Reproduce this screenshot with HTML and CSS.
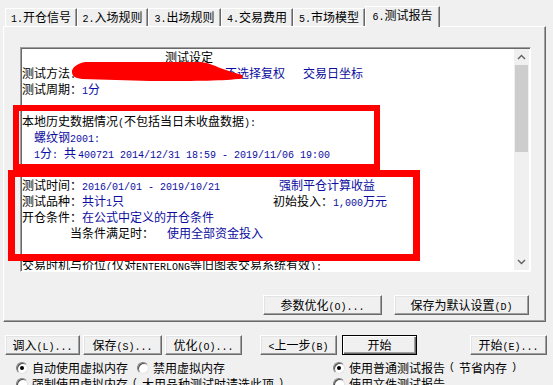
FILE: index.html
```html
<!DOCTYPE html>
<html>
<head>
<meta charset="utf-8">
<link rel="stylesheet" href="styles.css">
</head>
<body>
<div class="window">
  <div class="tabs">
    <div class="tab t1"><span class="m">1.</span>开仓信号</div>
    <div class="tab t2"><span class="m">2.</span>入场规则</div>
    <div class="tab t3"><span class="m">3.</span>出场规则</div>
    <div class="tab t4"><span class="m">4.</span>交易费用</div>
    <div class="tab t5"><span class="m">5.</span>市场模型</div>
    <div class="tab t6 active"><span class="m">6.</span>测试报告</div>
  </div>
  <div class="panel">
    <div class="memo">
      <div class="memo-text">
        <div class="line title">测试设定</div>
        <div class="line">测试方法：<span class="v gap-a">不选择复权</span><span class="v gap-b">交易日坐标</span></div>
        <div class="line">测试周期：<span class="v"><span class="m">1</span>分</span></div>
        <div class="line"></div>
        <div class="line">本地历史数据情况<span class="m">(</span>不包括当日未收盘数据<span class="m">):</span></div>
        <div class="line ind v">螺纹钢<span class="m">2001:</span></div>
        <div class="line ind v"><span class="m">1</span>分<span class="m">: </span>共<span class="m gap-d">400721 2014/12/31 18:59 - 2019/11/06 19:00</span></div>
        <div class="line"></div>
        <div class="line"><span class="c1">测试时间：<span class="v m">2016/01/01 - 2019/10/21</span></span><span class="v c2a">强制平仓计算收益</span></div>
        <div class="line"><span class="c1">测试品种：<span class="v">共计<span class="m">1</span>只</span></span>初始投入：<span class="v"><span class="m">1,000</span>万元</span></div>
        <div class="line">开仓条件：<span class="v">在公式中定义的开仓条件</span></div>
        <div class="line ind2">当条件满足时：<span class="v gap-c">使用全部资金投入</span></div>
        <div class="line"></div>
        <div class="line">交易时机与价位<span class="m">(</span>仅对<span class="m">ENTERLONG</span>等旧图表交易系统有效<span class="m">):</span></div>
      </div>
      <div class="vscroll">
        <div class="sbtn"><svg width="15" height="16" viewBox="0 0 15 16"><polyline points="4,10 7.5,6.5 11,10" fill="none" stroke="#606060" stroke-width="1.4"/></svg></div>
        <div class="track"><div class="thumb"></div></div>
        <div class="sbtn"><svg width="15" height="16" viewBox="0 0 15 16"><polyline points="4,6 7.5,9.5 11,6" fill="none" stroke="#606060" stroke-width="1.4"/></svg></div>
      </div>
    </div>
    <div class="panel-buttons">
      <button class="btn b-opt">参数优化<span class="m">(O)...</span></button>
      <button class="btn b-def">保存为默认设置<span class="m">(D)</span></button>
    </div>
  </div>
  <div class="actions">
    <button class="btn a1">调入<span class="m">(L)...</span></button>
    <button class="btn a2">保存<span class="m">(S)...</span></button>
    <button class="btn a3">优化<span class="m">(O)...</span></button>
    <button class="btn a4"><span class="m">&lt;</span>上一步<span class="m">(B)</span></button>
    <button class="btn a5 default">开始</button>
    <button class="btn a6">开始<span class="m">(E)...</span></button>
  </div>
  <div class="options">
    <div class="opt"><span class="radio on"></span>自动使用虚拟内存</div>
    <div class="opt"><span class="radio"></span>禁用虚拟内存</div>
    <div class="opt"><span class="radio on"></span>使用普通测试报告<span class="m">(</span>节省内存<span class="m">)</span></div>
    <div class="opt wide"><span class="radio"></span>强制使用虚拟内存<span class="m">(</span>大用品种测试时请选此项<span class="m">)</span></div>
    <div class="opt"><span class="radio"></span>使用文件测试报告</div>
  </div>

  <svg class="scribble" width="176" height="26" viewBox="0 0 176 26"><path d="M2,14 C2,10 6,6 15,4 L130,4 C140,5 145,8 150,10 C158,13 166,15 172,17 C174,19 173,21 168,21 C150,23 120,23 80,23 L12,21 C5,20 2,18 2,14 Z" fill="#ff0000"/></svg>
  <div class="mark mark1"></div>
  <div class="mark mark2"></div>
</div>
</body>
</html>
```
FILE: styles.css
```css
* { box-sizing: border-box; }
html, body { margin: 0; padding: 0; }
body {
  background: #f0f0f0;
  font-family: "Noto Sans CJK SC", "Liberation Sans", sans-serif;
  font-size: 12px;
  color: #000;
}
.window { position: relative; width: 553px; height: 385px; overflow: hidden; }
.m { font-family: "Liberation Mono", monospace; font-size: 10px; }

/* tabs */
.tabs { display: flex; align-items: flex-end; height: 26px; padding-left: 5px; }
.tab {
  height: 18px;
  line-height: 16px;
  text-align: center;
  white-space: nowrap;
  border-top: 1px solid #fff;
  border-left: 1px solid #fff;
  border-right: 1px solid #696969;
  box-shadow: inset -1px 0 0 #a0a0a0;
}
.tab.active {
  height: 21px;
  margin-bottom: -1px;
  position: relative;
  z-index: 1;
  background: #f0f0f0;
  line-height: 15px;
}
.t1 { width: 72px; }
.t2 { width: 71px; }
.t3 { width: 73px; }
.t4 { width: 72px; }
.t5 { width: 72px; }
.t6 { width: 75px; }

/* panel */
.panel {
  margin-left: 3px;
  width: 543px;
  height: 296px;
  border: 1px solid;
  border-color: #fff #696969 #696969 #fff;
  box-shadow: inset -1px -1px 0 #a0a0a0;
  padding: 20px 0 0 16px;
}
.memo {
  display: flex;
  width: 511px;
  height: 225px;
  background: #fff;
  border: 1px solid;
  border-color: #a0a0a0 #fff #fff #a0a0a0;
  box-shadow: inset 1px 1px 0 #696969;
  padding: 1px;
}
.memo-text { flex: 1; overflow: hidden; }
.line { height: 16px; line-height: 16px; white-space: pre; overflow: visible; }
.title { padding-left: 143px; }
.ind { padding-left: 12px; }
.ind2 { padding-left: 48px; }
.v { color: #0c0ca0; }
.gap-a { margin-left: 143px; }
.gap-b { margin-left: 18px; }
.gap-c { margin-left: 13px; }
.gap-d { margin-left: 2px; }
.c1 { display: inline-block; width: 251px; }
.c2a { padding-left: 6px; }

.vscroll { width: 15px; display: flex; flex-direction: column; background: #f0f0f0; }
.sbtn { height: 16px; display: flex; }
.track { flex: 1; }
.thumb { height: 87px; background: #cdcdcd; margin: 0 1px; }

.panel-buttons {
  display: flex;
  justify-content: flex-end;
  gap: 12px;
  margin-top: 23px;
  padding-right: 16px;
}

/* buttons */
.btn {
  height: 20px;
  padding: 0;
  font: inherit;
  line-height: 18px;
  color: #000;
  background: #f0f0f0;
  border: 1px solid;
  border-color: #fff #696969 #696969 #fff;
  box-shadow: inset -1px -1px 0 #a0a0a0, inset 1px 1px 0 #e3e3e3;
  white-space: nowrap;
}
.btn.default {
  border-color: #000;
  box-shadow: inset 1px 1px 0 #fff, inset -1px -1px 0 #696969, inset -2px -2px 0 #a0a0a0;
}
.b-opt { width: 119px; }
.b-def { width: 135px; }

.actions { display: flex; margin-top: 13px; padding-left: 5px; height: 20px; }
.a1 { width: 75px; }
.a2 { width: 79px; margin-left: 3px; }
.a3 { width: 77px; margin-left: 3px; }
.a4 { width: 77px; margin-left: 18px; }
.a5 { width: 75px; margin-left: 5px; }
.a6 { width: 77px; margin-left: 53px; }

/* options */
.options {
  display: grid;
  grid-template-columns: 121px 196px 1fr;
  grid-auto-rows: 16px;
  margin-top: 5px;
  padding-left: 16px;
}
.opt { display: flex; align-items: center; gap: 4px; white-space: nowrap; line-height: 16px; }
.wide { grid-column: span 2; }
.radio {
  width: 12px;
  height: 12px;
  flex: none;
  border-radius: 50%;
  background: #fff;
  border: 1px solid;
  border-color: #808080 #e3e3e3 #e3e3e3 #808080;
  box-shadow: inset 1px 1px 0 #505050;
  display: flex;
  align-items: center;
  justify-content: center;
}
.radio.on::after {
  content: "";
  width: 4px;
  height: 4px;
  border-radius: 50%;
  background: #000;
}

/* annotations over the screenshot */
.scribble { position: absolute; left: 70px; top: 58px; }
.mark { position: absolute; border: solid #ff0000; }
.mark1 { left: 13px; top: 105px; width: 367px; height: 65px; border-width: 6px; }
.mark2 { left: 8px; top: 170px; width: 412px; height: 91px; border-width: 7px; }
```
